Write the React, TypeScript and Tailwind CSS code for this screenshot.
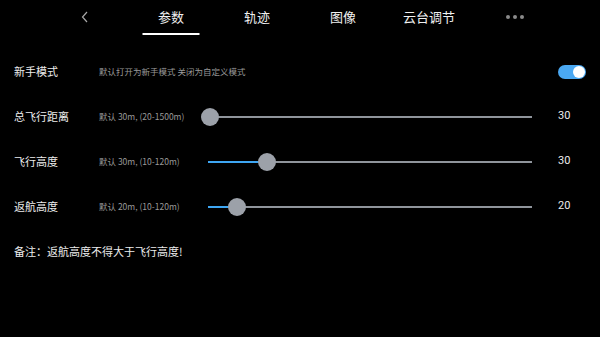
import React from 'react';

const FONT = { fontFamily: '"Noto Sans CJK SC", "Noto Sans", sans-serif' };

interface SliderRowProps {
  label: string;
  hint: string;
  value: number;
  min: number;
  max: number;
  fill?: boolean;
}

const SliderRow: React.FC<SliderRowProps> = ({ label, hint, value, min, max, fill = true }) => {
  const pct = ((value - min) / (max - min)) * 100;
  return (
    <div className="flex items-center h-[45px]">
      <div className="w-[85px] text-[11px] text-[#ececec]">{label}</div>
      <div className="w-[109px] text-[8.5px] text-[#9a9a9a]">{hint}</div>
      <div className="relative flex-1 h-[18px] mr-[26px] flex items-center">
        <div className="w-full h-[2px] bg-[#8f949b]" />
        {fill && (
          <div className="absolute left-0 h-[2px] bg-[#3ea6f2]" style={{ width: `${pct}%` }} />
        )}
        <div
          className="absolute w-[18px] h-[18px] -ml-[9px] rounded-full bg-[#9ca1a9]"
          style={{ left: `${pct}%` }}
        />
      </div>
      <div className="w-[28px] text-[11px] text-[#ececec]" style={{ fontFamily: 'Roboto, sans-serif' }}>{value}</div>
    </div>
  );
};

const App: React.FC = () => {
  const tabs = ['参数', '轨迹', '图像', '云台调节'];
  return (
    <div className="w-[600px] h-[337px] bg-black overflow-hidden" style={FONT}>
      {/* Header */}
      <div className="flex h-[36px] px-[42px]">
        <div className="w-[86px] flex items-center justify-center">
          <svg width="8" height="12" viewBox="0 0 8 12" className="-mt-[2px]">
            <polyline points="6,1 1.5,6 6,11" fill="none" stroke="#a8a8a8" strokeWidth="1.2" />
          </svg>
        </div>
        {tabs.map((t, i) => (
          <div key={t} className="relative w-[86px] flex items-center justify-center">
            <span className="text-[13px] text-[#f0f0f0] -mt-[3px]">{t}</span>
            {i === 0 && (
              <div className="absolute bottom-[1px] left-1/2 -translate-x-1/2 w-[57px] h-[2px] bg-white" />
            )}
          </div>
        ))}
        <div className="w-[86px] flex items-center justify-center gap-[3px] -mt-[3px]">
          <div className="w-[4px] h-[4px] rounded-full bg-[#8a8a8a]" />
          <div className="w-[4px] h-[4px] rounded-full bg-[#8a8a8a]" />
          <div className="w-[4px] h-[4px] rounded-full bg-[#8a8a8a]" />
        </div>
      </div>

      {/* Settings */}
      <div className="mt-[13px] pl-[14px] pr-[14px]">
        <div className="flex items-center h-[45px]">
          <div className="w-[85px] text-[11px] text-[#ececec]">新手模式</div>
          <div className="flex-1 text-[8.5px] text-[#9a9a9a]">默认打开为新手模式 关闭为自定义模式</div>
          <div className="w-[28px] h-[14px] rounded-full bg-[#4aa8f2] flex items-center justify-end pr-[1px]">
            <div className="w-[12px] h-[12px] rounded-full bg-white" />
          </div>
        </div>
        <SliderRow label="总飞行距离" hint="默认 30m, (20-1500m)" value={30} min={20} max={1500} fill={false} />
        <SliderRow label="飞行高度" hint="默认 30m, (10-120m)" value={30} min={10} max={120} />
        <SliderRow label="返航高度" hint="默认 20m, (10-120m)" value={20} min={10} max={120} />
        <div className="flex items-center h-[45px] text-[11px] text-[#ececec]">备注：返航高度不得大于飞行高度!</div>
      </div>
    </div>
  );
};

export default App;
